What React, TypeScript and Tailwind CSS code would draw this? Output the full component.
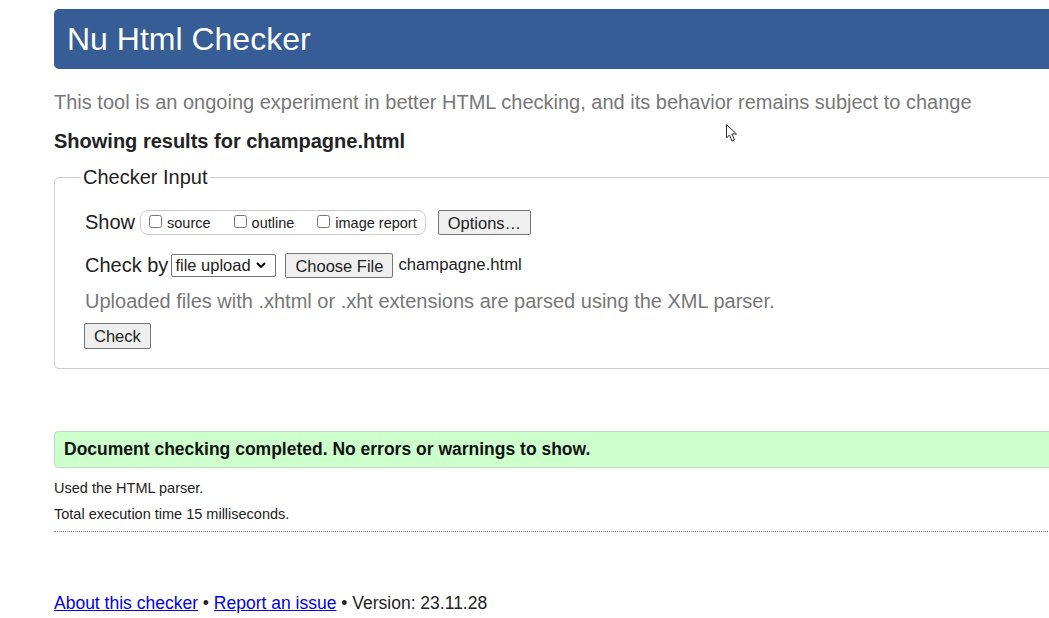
export default function App() {
  return (
    <div className="relative min-h-screen w-full overflow-hidden bg-white font-['Liberation_Sans',Arial,sans-serif] text-[#222]">
      <div className="pl-[54px] w-[1120px]">
        <header className="mt-[9px] h-[60px] bg-[#365d95] rounded-[5px] flex items-center pl-[13px]">
          <h1 className="text-white text-[32px] leading-none">Nu Html Checker</h1>
        </header>

        <p className="mt-[21px] text-[20px] leading-[24px] text-[#777]">
          This tool is an ongoing experiment in better HTML checking, and its behavior remains subject to change
        </p>

        <p className="mt-[15px] text-[20px] leading-[24px] font-bold">Showing results for champagne.html</p>

        <fieldset className="mt-[12px] border border-[#ccc] rounded-[5px] pl-[30px] pb-[19px] pt-0">
          <legend className="text-[20px] leading-[24px] px-[2px] ml-[-4px]">Checker Input</legend>

          <div className="flex items-center mt-[20px] h-[26px]">
            <span className="text-[20px] mr-[5px]">Show</span>
            <div className="flex items-center h-[25px] border border-[#ccc] rounded-[8px] pl-[8px] pr-[8px] text-[14.5px]">
              <label className="flex items-center">
                <input type="checkbox" className="w-[13px] h-[13px] mr-[5px] mb-[2px]" />
                <span className="mt-[4px]">source</span>
              </label>
              <label className="flex items-center ml-[23px]">
                <input type="checkbox" className="w-[13px] h-[13px] mr-[5px] mb-[2px]" />
                <span className="mt-[4px]">outline</span>
              </label>
              <label className="flex items-center ml-[23px]">
                <input type="checkbox" className="w-[13px] h-[13px] mr-[5px] mb-[2px]" />
                <span className="mt-[4px]">image report</span>
              </label>
            </div>
            <button className="ml-[12px] h-[25px] px-[9px] text-[16.5px] bg-[#efefef] border border-[#767676] rounded-[2px]">
              Options…
            </button>
          </div>

          <div className="flex items-center mt-[17px] h-[26px]">
            <span className="text-[20px] mr-[3px]">Check by</span>
            <div className="h-[23px] w-[105px] border border-[#767676] rounded-[2px] flex items-center pl-[3px] text-[16.5px]">
              <span>file upload</span>
              <svg className="ml-[4px]" width="12" height="12" viewBox="0 0 12 12">
                <path d="M2 4 L6 8 L10 4" fill="none" stroke="#000" strokeWidth="1.8" />
              </svg>
            </div>
            <button className="ml-[9px] h-[25px] px-[9px] text-[16.5px] bg-[#efefef] border border-[#767676] rounded-[2px]">
              Choose File
            </button>
            <span className="ml-[5px] text-[16.7px]">champagne.html</span>
          </div>

          <p className="mt-[11px] text-[20px] leading-[24px] text-[#777]">
            Uploaded files with .xhtml or .xht extensions are parsed using the XML parser.
          </p>

          <button className="mt-[10px] ml-[-1px] h-[26px] px-[9px] text-[16.5px] bg-[#efefef] border border-[#767676] rounded-[2px]">
            Check
          </button>
        </fieldset>

        <div className="mt-[62px] h-[37px] bg-[#ccffcc] border border-[#bbddbb] rounded-[4px] flex items-center pl-[9px]">
          <p className="text-[17.5px] font-bold text-[#111]">Document checking completed. No errors or warnings to show.</p>
        </div>

        <p className="mt-[12px] text-[14.5px] leading-[17px]">Used the HTML parser.</p>
        <p className="mt-[9px] text-[14.5px] leading-[17px]">Total execution time 15 milliseconds.</p>
        <div className="mt-[8px] border-t border-dotted border-[#888]" />

        <p className="mt-[60px] text-[17.5px] leading-[22px]">
          <a href="#" className="text-[#0000ee] underline">About this checker</a> •{" "}
          <a href="#" className="text-[#0000ee] underline">Report an issue</a> • Version: 23.11.28
        </p>
      </div>

      {/* mouse pointer captured in the screenshot */}
      <svg className="absolute left-[726px] top-[124px]" width="13" height="19" viewBox="0 0 13 19">
        <path d="M0.5 0.5 L0.5 14 L3.5 11 L6 17 L8.5 16 L6 10 L10.5 10 Z" fill="#fff" stroke="#2a2a3a" strokeWidth="1" strokeLinejoin="round" />
      </svg>
    </div>
  );
}
